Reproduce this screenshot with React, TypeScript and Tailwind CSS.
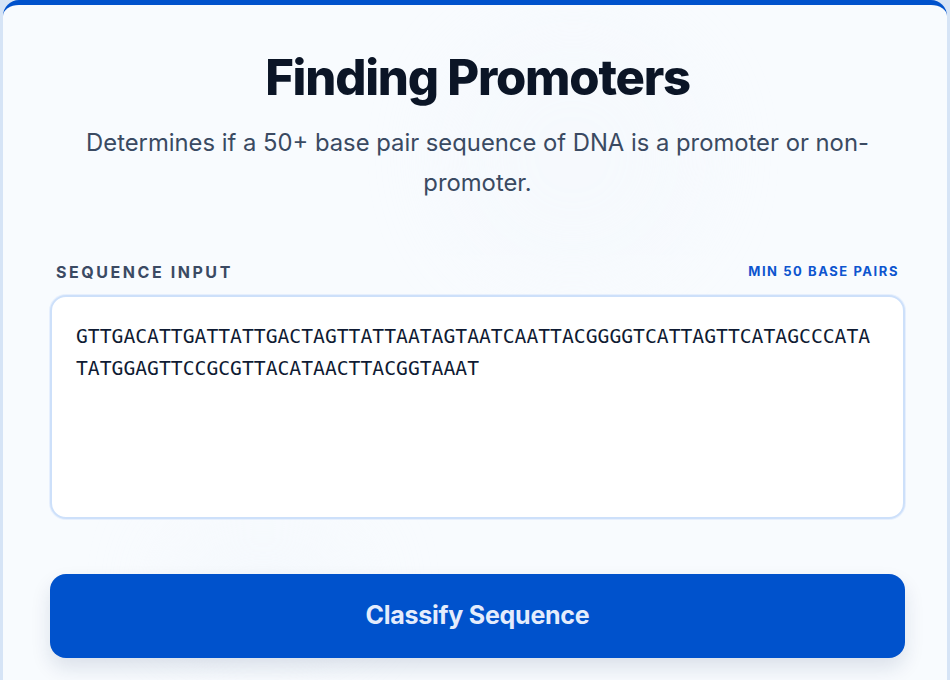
import React from 'react'

const sequence =
  'GTTGACATTGATTATTGACTAGTTATTAATAGTAATCAATTACGGGGTCATTAGTTCATAGCCCATATATGGAGTTCCGCGTTACATAACTTACGGTAAAT'

const App = () => {
  return (
    <div className="min-h-[680px] bg-[#d6e4f6] px-[3px] font-['Inter',sans-serif]">
      {/* Card */}
      <div className="relative min-h-[680px] overflow-hidden rounded-t-2xl border-t-[5px] border-[#0052cc] bg-[#f8fbfe]">
        {/* faint background blobs */}
        <div className="pointer-events-none absolute left-[440px] top-[20px] h-[260px] w-[260px] rounded-full bg-[#f1f6fc] opacity-30 blur-2xl" />
        <div className="pointer-events-none absolute left-[160px] top-[520px] h-[120px] w-[200px] rounded-full bg-[#f1f6fc] opacity-40 blur-2xl" />

        <div className="relative pl-[47px] pr-[42px] pt-[43px]">
          {/* Header */}
          <h1 className="text-center text-[49px] font-extrabold leading-[60px] tracking-[-0.025em] text-[#0b1526]">
            Finding Promoters
          </h1>
          <p className="mt-[15px] text-center text-[23.8px] leading-[40px] text-[#3a4a62]">
            Determines if a 50+ base pair sequence of DNA is a promoter or non-promoter.
          </p>

          {/* Input */}
          <div className="mt-[57px] flex items-center justify-between px-[6px]">
            <span className="text-[16px] font-bold tracking-[0.16em] text-[#3b4a63]">SEQUENCE INPUT</span>
            <span className="text-[13px] font-bold tracking-[0.12em] text-[#0d55cf]">MIN 50 BASE PAIRS</span>
          </div>
          <textarea
            className="mt-[11px] block h-[224px] w-full resize-none rounded-2xl border-2 border-[#cde0fa] bg-white px-[24px] py-[24px] font-['DejaVu_Sans_Mono',monospace] text-[19.7px] leading-[32px] text-[#0f1b33] shadow-[0_0_0_1px_rgba(219,232,252,0.6)] outline-none"
            defaultValue={sequence}
          />

          {/* Action */}
          <button className="mt-[55px] flex h-[84px] w-full items-center justify-center rounded-2xl bg-[#0052cc] text-[25px] font-bold tracking-[-0.01em] text-[#e4ecfc] shadow-[0_10px_20px_rgba(15,40,90,0.12)]">
            Classify Sequence
          </button>
        </div>
      </div>
    </div>
  )
}

export default App
